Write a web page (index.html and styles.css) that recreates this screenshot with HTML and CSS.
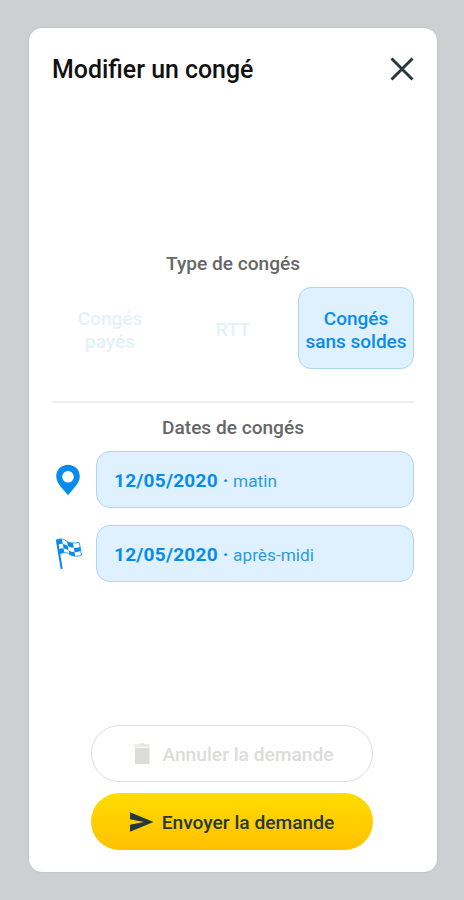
FILE: index.html
```html
<!doctype html>
<html lang="fr">
<head>
    <meta charset="utf-8">
    <meta name="viewport" content="width=device-width, initial-scale=1">
    <title>Modifier un congé</title>
    <link rel="stylesheet" href="styles.css">
</head>
<body>

<main class="modal">
    <!-- En-tête -->
    <header class="modal-header">
        <h1 class="modal-title">Modifier un congé</h1>
        <button class="modal-close" type="button" aria-label="Fermer">
            <svg width="24" height="24" viewBox="0 0 24 24" fill="none" stroke="currentColor" stroke-width="2.9">
                <path d="M1.500 1.500l21 21M22.500 1.500l-21 21"/>
            </svg>
        </button>
    </header>

    <!-- Type de congés -->
    <section class="section-types">
        <h2 class="section-title">Type de congés</h2>
        <div class="types">
            <button class="type" type="button" disabled>Congés<br>payés</button>
            <button class="type" type="button" disabled>RTT</button>
            <button class="type type-selected" type="button">Congés<br>sans soldes</button>
        </div>
    </section>

    <!-- Dates de congés -->
    <section class="section-dates">
        <h2 class="section-title">Dates de congés</h2>
        <div class="date-row">
            <svg class="date-icon" width="32" height="32" viewBox="0 0 32 32" fill="currentColor">
                <path fill-rule="evenodd" d="M16 .8C9.300.8 4.200 5.900 4.200 12.400c0 4 2.200 7.200 4.800 10.500L16 31.200l7-8.300c2.600-3.300 4.800-6.500 4.800-10.500C27.800 5.900 22.700.8 16 .8zm0 6.200a5.800 5.800 0 1 1 0 11.600A5.800 5.800 0 0 1 16 7z"/>
            </svg>
            <button class="date" type="button"><strong class="date-day">12/05/2020 ·</strong> matin</button>
        </div>
        <div class="date-row">
            <svg class="date-icon" width="32" height="32" viewBox="0 0 32 32" fill="none" stroke="currentColor">
                <path stroke-width="2" d="M4.800 1.500L9.700 31"/>
                <path stroke-width=".8" d="M5 2c3-1.600 6-1.500 9 .8s8 2.800 13.200 1.600L29.600 17c-4.500 2-8.700 1.400-12-.8s-6.500-2-10 0z"/>
                <g fill="currentColor" stroke="none">
                    <path d="M5 2q2.500-1.300 5-.8l.8 4.700q-2.500-.4-5 .9zM15 3.500q2.800 1.600 6 1.700l.8 4.600q-3.300-.2-6-1.900z"/>
                    <path d="M10.800 5.900q2.700.4 5 2l.8 4.500q-2.500-1.800-5-2zM21.800 9.800q3.300.1 6.400-.9l.7 4.100q-3.200 1.300-6.400 1.100z"/>
                    <path d="M6.700 11.600q2.300-1.600 4.900-1.200l.8 4.400q-2.600-.1-4.900 1.300zM16.600 12.400q2.600 1.700 5.900 1.700l.7 4q-3.200 0-5.900-1.900z"/>
                </g>
            </svg>
            <button class="date" type="button"><strong class="date-day">12/05/2020 ·</strong> après-midi</button>
        </div>
    </section>

    <!-- Actions -->
    <footer class="actions">
        <button class="btn btn-cancel" type="button" disabled>
            <svg class="btn-icon" width="24" height="24" viewBox="0 0 24 24" fill="currentColor">
                <path opacity=".7" d="M4.500 4.700V2.300H9l1-1h4l1 1h4.500v2.400z"/>
                <path d="M5 5.700h14.500V22H5z"/>
            </svg>
            Annuler la demande
        </button>
        <button class="btn btn-send" type="button">
            <svg class="btn-icon" width="24" height="24" viewBox="0 0 24 24" fill="currentColor">
                <path d="M0 2.200L23.500 12 0 21.800v-7.100L14 12 0 9.300z"/>
            </svg>
            Envoyer la demande
        </button>
    </footer>
</main>

</body>
</html>
```
FILE: styles.css
```css
:root {
    --page-bg: #cdcfd0;
    --blue: #078ced;
    --blue-bg: #dff0fe;
    --blue-border: #acd8e8;
    --dark: #25383d;
}

* {
    box-sizing: border-box;
}

body {
    margin: 0;
    padding: 28px 27px 28px 29px;
    background: var(--page-bg);
    font-family: Roboto, Arial, sans-serif;
}

button {
    padding: 0;
    border: 0;
    background: none;
    font: inherit;
    color: inherit;
}

svg {
    display: block;
    flex-shrink: 0;
}

/* Fenêtre */
.modal {
    display: flex;
    flex-direction: column;
    height: 844px;
    padding: 24px 23px 22px;
    background: #fff;
    border-radius: 13px;
    box-shadow: 0 0 2px rgba(0, 0, 0, 0.15);
}

.modal-header {
    display: flex;
    align-items: center;
    justify-content: space-between;
    height: 34px;
}

.modal-title {
    margin: 0;
    font-size: 24.900px;
    font-weight: 500;
    color: #111;
}

.modal-close {
    color: var(--dark);
}

/* Sections */
.section-title {
    margin: 0;
    font-size: 19.100px;
    font-weight: 500;
    line-height: 24px;
    text-align: center;
    color: #666;
}

.section-types {
    margin-top: 166px;
    padding-bottom: 32px;
    border-bottom: 2px solid #ededee;
}

.types {
    display: grid;
    grid-template-columns: repeat(3, 1fr);
    gap: 7px;
    margin-top: 11px;
}

.type {
    height: 82px;
    padding-top: 3px;
    border: 1px solid transparent;
    border-radius: 13px;
    font-size: 19px;
    font-weight: 500;
    line-height: 23px;
    color: #e3f1fa;
}

.type-selected {
    border-color: var(--blue-border);
    background: var(--blue-bg);
    color: var(--blue);
}

.section-dates {
    margin-top: 13px;
}

.date-row {
    display: flex;
    align-items: center;
    gap: 12px;
    margin-top: 17px;
}

.section-title + .date-row {
    margin-top: 11px;
}

.date-icon {
    color: var(--blue);
}

.date {
    flex: 1;
    height: 57px;
    padding: 1px 0 0 17px;
    border: 1px solid var(--blue-border);
    border-radius: 14px;
    background: var(--blue-bg);
    font-size: 17.3px;
    text-align: left;
    color: #2b9ddb;
}

.date-day {
    font-size: 19px;
    font-weight: 700;
    letter-spacing: 0.25px;
    color: var(--blue);
}

/* Boutons */
.actions {
    display: flex;
    flex-direction: column;
    align-items: center;
    gap: 11px;
    margin-top: auto;
    padding-right: 2px;
}

.btn {
    display: flex;
    align-items: center;
    justify-content: center;
    gap: 8px;
    width: 282px;
    height: 57px;
    padding-top: 2px;
    border-radius: 29px;
    font-size: 19.2px;
    font-weight: 500;
}

.btn-icon {
    margin-top: -2px;
}

.btn-cancel {
    border: 1px solid #dedee0;
    color: #dcdcd9;
}

.btn-send {
    background: linear-gradient(#ffdc00, #ffc000);
    color: var(--dark);
}
```
